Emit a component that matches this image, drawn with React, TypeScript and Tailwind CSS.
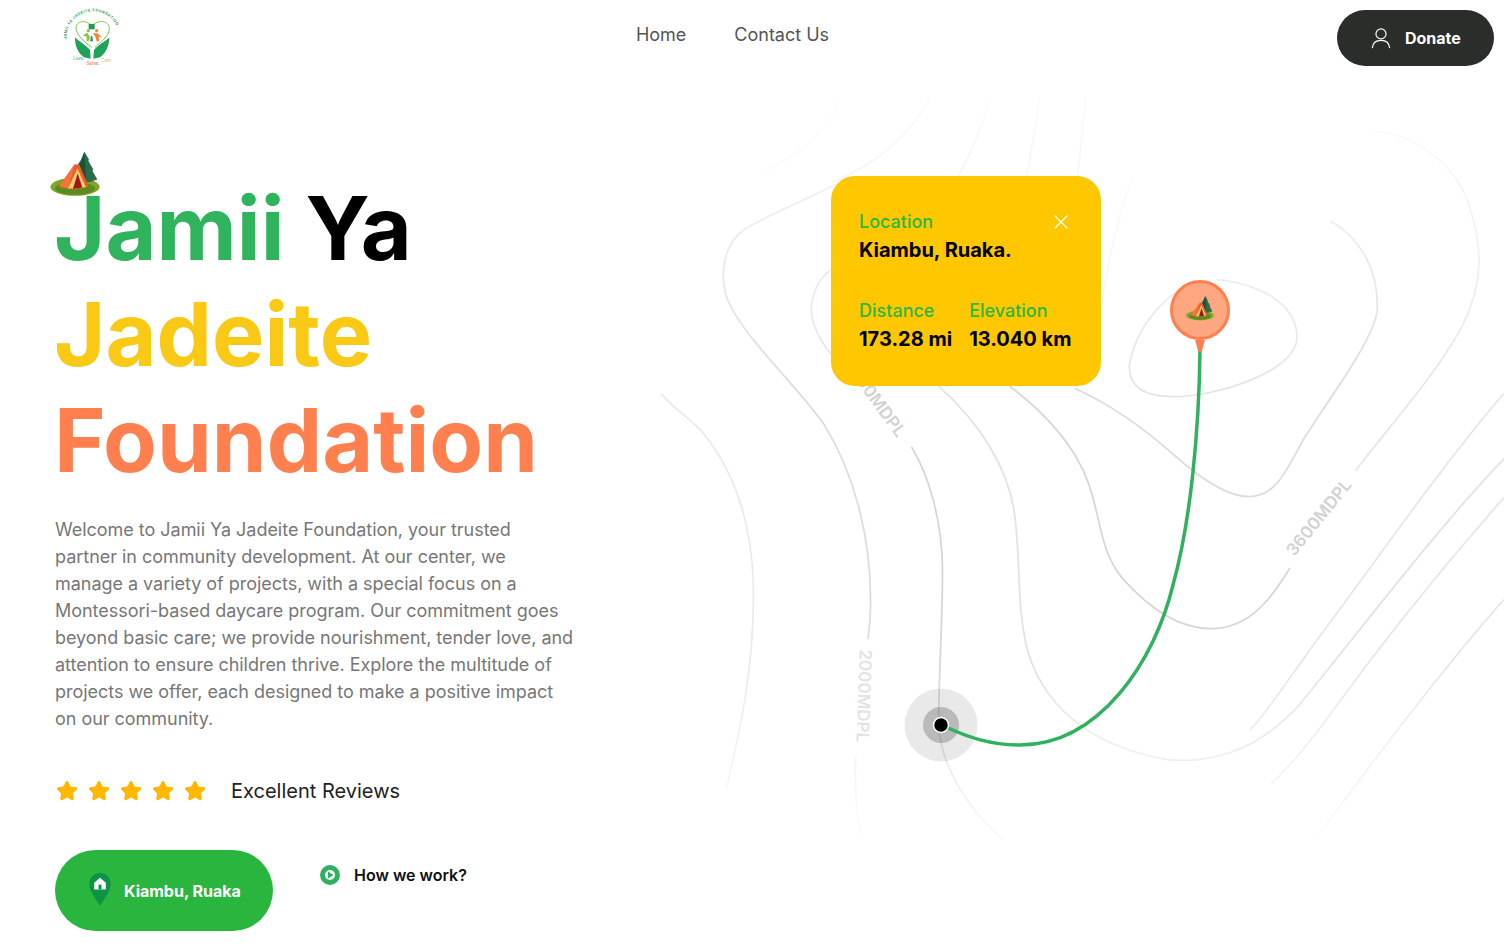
import { Star, X } from "lucide-react";

const Tent = ({ className }: { className: string }) => (
  <svg viewBox="30 30 150 140" className={className}>
    <ellipse cx="105" cy="140" rx="74" ry="27" fill="#7fa72c" />
    <ellipse cx="105" cy="145" rx="60" ry="19" fill="#5c8a1e" />
    <path d="M133 35 L147 58 L145 62 L160 88 L157 92 L172 118 L148 126 L112 122 L112 75 L122 60 Z" fill="#2c6a4a" />
    <path d="M133 35 L126 58 L118 75 L120 110 L138 118 L136 80 Z" fill="#1d5238" />
    <path d="M57 139 L104 72 L118 74 L146 139 L100 148 Z" fill="#ed5a2c" />
    <path d="M57 139 L104 72 L85 146 Z" fill="#f4743a" />
    <path d="M84 146 L112 84 L138 141 Z" fill="#f2cd6c" />
    <path d="M99 146 L113 100 L127 142 Z" fill="#a3171c" />
  </svg>
);

const Logo = () => (
  <svg viewBox="60 18 204 198" className="h-[66px] w-[68px]">
    <defs>
      <path id="logo-arc" d="M80 118 A78 78 0 1 1 238 108" fill="none" />
    </defs>
    <text fontSize="11" fontWeight="700" fill="#2f9e4f" fontFamily="Inter, sans-serif" letterSpacing="1.6">
      <textPath href="#logo-arc">JAMII YA JADEITE FOUNDATION</textPath>
    </text>
    <path d="M155 142 C122 118 108 98 108 85 C108 64 136 56 155 78 C175 56 210 62 208 88 C206 110 182 126 165 142" fill="none" stroke="#7ec850" strokeWidth="3" />
    <rect x="146" y="72" width="18" height="16" fill="#1f9d55" />
    <circle cx="145" cy="92" r="5" fill="#8cc63f" />
    <path d="M128 106 L142 98 L150 110 L146 124 L140 124 L140 110 Z" fill="#8cc63f" />
    <circle cx="170" cy="92" r="5" fill="#f58634" />
    <path d="M158 100 L172 100 L186 112 L176 110 L178 124 L170 124 L166 110 Z" fill="#f58634" />
    <path d="M153 108 L157 108 L159 124 L150 124 Z" fill="#1f9d55" />
    <path d="M105 112 C116 124 136 134 150 150 L152 176 L132 172 C114 160 104 136 105 112 Z" fill="#1fa35b" />
    <path d="M208 112 C198 124 176 134 162 150 L160 176 L180 172 C198 160 208 136 208 112 Z" fill="#1fa35b" />
    <text x="100" y="181" fontSize="13" fill="#2f9e4f" fontFamily="Inter, sans-serif">Love.</text>
    <text x="140" y="194" fontSize="13" fill="#d9542b" fontFamily="Inter, sans-serif">Serve.</text>
    <text x="184" y="186" fontSize="13" fill="#e2b93b" fontFamily="Inter, sans-serif">Care</text>
  </svg>
);

// traced from the reference, o is how strong the line shows
const contours = [
  { d: "M20 625 C50 665 80 680 100 710 C170 810 190 930 190 1040 C190 1200 165 1320 140 1440", o: 0.5 },
  { d: "M340 195 C280 230 210 260 170 290 C130 325 125 400 150 450 C190 530 270 610 320 690 C375 790 405 920 405 1050 C405 1090 403 1110 400 1132", o: 0.85 },
  { d: "M378 1375 C375 1440 380 1500 390 1546", o: 0.5 },
  { d: "M335 368 C300 395 290 445 300 480 C315 530 350 570 385 610", o: 0.7 },
  { d: "M480 735 C515 800 535 890 537 980 C538 1080 530 1200 530 1310 C535 1400 590 1490 650 1546", o: 1 },
  { d: "M530 610 C600 680 665 780 672 900 C680 1000 675 1060 690 1140 C715 1260 800 1350 950 1380 C1060 1390 1130 1340 1190 1270 C1300 1120 1440 910 1568 760", o: 0.7 },
  { d: "M660 610 C720 660 780 730 805 810 C830 890 825 950 870 1010 C920 1070 970 1110 1030 1110 C1100 1110 1140 1050 1175 985", o: 1 },
  { d: "M1295 785 C1360 690 1440 590 1490 490 C1530 400 1530 330 1505 240 C1480 150 1400 90 1330 85", o: 0.6 },
  { d: "M780 615 C850 650 910 700 960 750 C1010 800 1060 838 1100 838 C1150 838 1170 780 1200 720 C1250 630 1320 530 1335 460 C1340 380 1310 310 1250 270", o: 0.85 },
  { d: "M1010 395 C950 410 890 490 880 570 C880 620 920 632 960 632 C1040 632 1188 580 1188 510 C1188 440 1120 400 1040 390", o: 0.65 },
  { d: "M1568 625 C1450 780 1340 960 1240 1110 C1180 1200 1130 1290 1100 1320", o: 0.6 },
  { d: "M1568 840 C1450 990 1330 1160 1240 1300 C1200 1360 1170 1400 1140 1430", o: 0.6 },
  { d: "M1568 1050 C1450 1200 1330 1380 1220 1546", o: 0.6 },
  { d: "M515 15 C480 90 420 150 335 190", o: 0.6 },
  { d: "M350 20 C320 90 270 140 210 165", o: 0.3 },
  { d: "M625 15 C610 80 590 130 565 180", o: 0.6 },
  { d: "M715 15 C708 80 700 130 690 180", o: 0.6 },
  { d: "M800 15 C795 80 790 130 785 180", o: 0.6 },
  { d: "M885 180 C860 260 840 360 830 440", o: 0.3 },
];

const Map = () => (
  <div className="absolute inset-0">
    <svg viewBox="0 0 854 760" className="absolute left-0 top-0 h-[760px] w-[854px]">
      <defs>
        <linearGradient id="fade" gradientUnits="userSpaceOnUse" x1="0" y1="0" x2="0" y2="760">
          <stop offset="0" stopColor="#222" />
          <stop offset="0.25" stopColor="#aaa" />
          <stop offset="0.4" stopColor="#fff" />
          <stop offset="0.75" stopColor="#fff" />
          <stop offset="1" stopColor="#111" />
        </linearGradient>
        <mask id="fade-mask" maskUnits="userSpaceOnUse" x="0" y="0" width="854" height="760">
          <rect width="854" height="760" fill="url(#fade)" />
        </mask>
      </defs>
      <g mask="url(#fade-mask)">
        <g transform="scale(0.5446 0.4853)" fill="none" stroke="#d6d6d6">
          {contours.map((c) => (
            <path key={c.d} d={c.d} strokeOpacity={c.o} strokeWidth="1.75" vectorEffect="non-scaling-stroke" />
          ))}
        </g>
      </g>
      <circle cx="291" cy="635" r="36.5" fill="#000" fillOpacity="0.085" />
      <circle cx="291" cy="635" r="18" fill="#000" fillOpacity="0.2" />
      <path d="M550 260 C549 340 541 430 523 495 C505 570 450 655 370 655 C340 655 318 647 298 638" fill="none" stroke="#2fb15f" strokeWidth="3.5" />
      <circle cx="291" cy="635" r="7.5" fill="#000" stroke="#fff" strokeWidth="1.5" />
      <path d="M545 250 L555 250 L551.5 262 L548.5 262 Z" fill="#ff7f4e" />
      <circle cx="550" cy="220" r="28.5" fill="#ffa781" stroke="#ff7f4e" strokeWidth="3" />
    </svg>
    <Tent className="absolute left-[535px] top-[205px] h-[26px] w-[30px]" />
    <span className="absolute left-[623px] top-[415px] -rotate-[51deg] text-[17px] font-semibold text-[#d2d2d2]">3600MDPL</span>
    <span className="absolute left-[167px] top-[593px] rotate-[92deg] text-[17px] font-semibold text-[#e3e3e3]">2000MDPL</span>
    <span className="absolute left-[178px] top-[295px] rotate-[54deg] text-[17px] font-semibold text-[#d2d2d2]">2800MDPL</span>
  </div>
);

const LocationCard = () => (
  <div className="absolute left-[181px] top-[86px] h-[210px] w-[270px] rounded-[24px] bg-[#ffc700] pl-7 pr-7 pt-[33px]">
    <div className="flex items-start justify-between">
      <div>
        <p className="text-lg font-medium leading-[26px] text-[#2bb741]">Location</p>
        <p className="text-xl font-bold leading-[30px] text-black">Kiambu, Ruaka.</p>
      </div>
      <X className="mt-[1px] text-white" size={24} strokeWidth={1.25} />
    </div>
    <div className="mt-[33px] flex gap-[17px]">
      <div>
        <p className="text-lg font-medium leading-[26px] text-[#2bb741]">Distance</p>
        <p className="text-xl font-bold leading-[30px] text-black">173.28 mi</p>
      </div>
      <div>
        <p className="text-lg font-medium leading-[26px] text-[#2bb741]">Elevation</p>
        <p className="text-xl font-bold leading-[30px] text-black">13.040 km</p>
      </div>
    </div>
  </div>
);

export default function App() {
  return (
    <div className="h-[952px] overflow-hidden bg-white font-[Inter,sans-serif]">
      <header className="flex h-[90px] items-start justify-between pl-[60px] pr-[10px]">
        <div className="pt-[6px]">
          <Logo />
        </div>
        <nav className="flex gap-12 pt-[21px] text-lg text-[#555]">
          <a href="#">Home</a>
          <a href="#">Contact Us</a>
        </nav>
        <button className="mt-[10px] flex h-14 w-[157px] items-center gap-[13px] rounded-full bg-[#2b2d2a] pl-[33px] font-bold text-white">
          <svg viewBox="0 0 24 24" className="h-[24px] w-[22px]" fill="none" stroke="#fff" strokeWidth="1.3">
            <circle cx="12" cy="7.5" r="5.5" />
            <path d="M2.5 23 C3 17 7 14.5 12 14.5 C17 14.5 21 17 21.5 23" />
          </svg>
          Donate
        </button>
      </header>

      <main className="flex">
        <section className="relative w-[650px] shrink-0 pl-[55px] pt-[85px]">
          <Tent className="absolute left-[50px] top-[60px] h-[47px] w-[50px]" />
          <h1 className="-ml-[1px] text-[88px] font-bold leading-[106px]">
            <span className="text-[#2fb35c]">Jamii</span> <span className="text-black">Ya</span>
            <br />
            <span className="text-[#f9c915]">Jadeite</span>
            <br />
            <span className="text-[#ff7f4e]">Foundation</span>
          </h1>
          <p className="mt-[23px] w-[520px] text-lg leading-[27px] tracking-[-0.03px] text-[#777]">
            Welcome to Jamii Ya Jadeite Foundation, your trusted partner in community development. At our center, we manage a variety of projects, with a special focus on a Montessori-based daycare program. Our commitment goes beyond basic care; we provide nourishment, tender love, and attention to ensure children thrive. Explore the multitude of projects we offer, each designed to make a positive impact on our community.
          </p>
          <div className="mt-[45px] flex items-center">
            <div className="flex gap-[10px] pl-[1px]">
              {[1, 2, 3, 4, 5].map((n) => (
                <Star key={n} size={22} className="fill-[#ffb800] text-[#ffb800]" />
              ))}
            </div>
            <span className="ml-[25px] text-xl text-[#222]">Excellent Reviews</span>
          </div>
          <div className="mt-[45px] flex items-start">
            <button className="flex h-[81px] w-[218px] items-center rounded-full bg-[#29b53e] pl-[33px] font-bold text-white">
              <svg viewBox="0 0 24 36" className="mb-[2px] h-[35px] w-[24px]">
                <path d="M12 35 C8 27 1 20 1 12 A11 11 0 0 1 23 12 C23 20 16 27 12 35 Z" fill="#0b9444" />
                <path d="M12 6 L18 11 L18 18 L6 18 L6 11 Z" fill="#fff" />
                <rect x="10.5" y="13" width="3" height="5" fill="#0b9444" />
              </svg>
              <span className="ml-[12px]">Kiambu, Ruaka</span>
            </button>
            <a href="#" className="ml-[47px] mt-[13px] flex items-center gap-[14px] font-semibold text-[#111]">
              <svg viewBox="0 0 20 20" className="h-5 w-5">
                <circle cx="10" cy="10" r="7.5" fill="#fff" stroke="#2fb15f" strokeWidth="5" />
                <path d="M8 6.5 L13.5 10 L8 13.5 Z" fill="#2fb15f" />
              </svg>
              How we work?
            </a>
          </div>
        </section>
        <section className="relative h-[760px] flex-1">
          <Map />
          <LocationCard />
        </section>
      </main>
    </div>
  );
}
